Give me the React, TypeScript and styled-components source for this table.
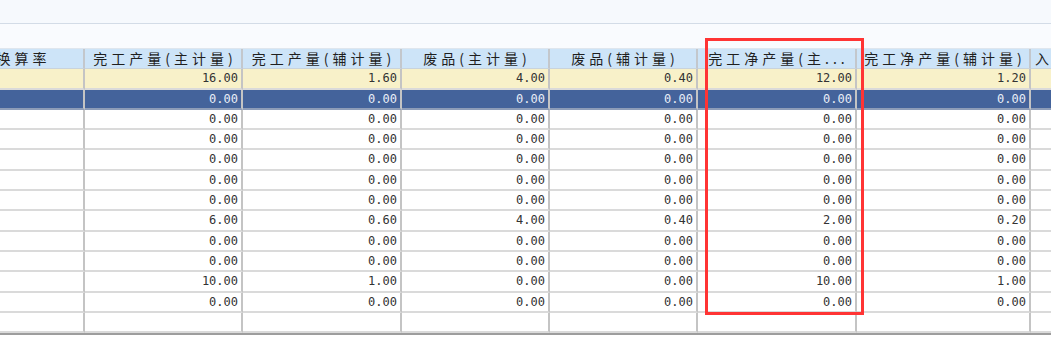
import styled, { createGlobalStyle } from 'styled-components';

const GlobalStyle = createGlobalStyle`
  html, body {
    margin: 0;
    padding: 0;
    background: #ffffff;
  }
  body {
    width: 1051px;
    height: 340px;
    overflow: hidden;
    font-family: 'Noto Sans CJK SC', 'Noto Sans', sans-serif;
  }
`;

const Page = styled.div`
  position: relative;
  width: 1051px;
  height: 340px;
  overflow: hidden;
  display: flex;
  flex-direction: column;
`;

const TopBar = styled.div`
  height: 24px;
  box-sizing: border-box;
  background: #f6f9fd;
  border-bottom: 1px solid #d3dce7;
`;

const ToolBand = styled.div`
  height: 25px;
  box-sizing: border-box;
  background: #f9fbfe;
  border-bottom: 1px solid #dfe6ee;
`;

const Grid = styled.div`
  margin-left: -40px;
  display: grid;
  grid-template-columns: 125px 158px 159px 148px 148px 159px 174px 150px;
  grid-auto-rows: 20.3px;
  border-bottom: 2px solid #9d9d9d;
  width: max-content;
`;

const HeadCell = styled.div<{ $left?: boolean }>`
  box-sizing: border-box;
  background: #cde4f8;
  border-right: 2px solid #c3c7cc;
  border-bottom: 1px solid #c9d3dc;
  font-size: 14px;
  letter-spacing: 4px;
  line-height: 19px;
  color: #1f1f1f;
  white-space: nowrap;
  overflow: hidden;
  text-align: ${(p) => (p.$left ? 'left' : 'center')};
  padding-left: 4px;
`;

const Cell = styled.div<{ $tone: 'sum' | 'sel' | 'plain' }>`
  box-sizing: border-box;
  background: ${(p) =>
    p.$tone === 'sum' ? '#f8f1c9' : p.$tone === 'sel' ? '#44639b' : '#ffffff'};
  border-right: 2px solid #c4c4c4;
  border-bottom: 2px solid ${(p) => (p.$tone === 'sel' ? '#8e9db8' : '#dadada')};
  font-family: 'DejaVu Sans Mono', 'Liberation Mono', monospace;
  font-size: 12px;
  line-height: 19px;
  color: ${(p) => (p.$tone === 'sel' ? '#e9eef7' : '#333333')};
  text-align: right;
  padding-right: 3px;
  white-space: nowrap;
`;

const Marker = styled.div`
  position: absolute;
  left: 705px;
  top: 38px;
  width: 159px;
  height: 277px;
  box-sizing: border-box;
  border: 3px solid #ff3434;
  pointer-events: none;
`;

const headers = [
  '换算率',
  '完工产量(主计量)',
  '完工产量(辅计量)',
  '废品(主计量)',
  '废品(辅计量)',
  '完工净产量(主...',
  '完工净产量(辅计量)',
  '入库数量(主计量)',
];

// one line per row: 完工主, 完工辅, 废品主, 废品辅, 净产主, 净产辅
const rows: (string[] | null)[] = [
  ['16.00', '1.60', '4.00', '0.40', '12.00', '1.20'],
  ['0.00', '0.00', '0.00', '0.00', '0.00', '0.00'],
  ['0.00', '0.00', '0.00', '0.00', '0.00', '0.00'],
  ['0.00', '0.00', '0.00', '0.00', '0.00', '0.00'],
  ['0.00', '0.00', '0.00', '0.00', '0.00', '0.00'],
  ['0.00', '0.00', '0.00', '0.00', '0.00', '0.00'],
  ['0.00', '0.00', '0.00', '0.00', '0.00', '0.00'],
  ['6.00', '0.60', '4.00', '0.40', '2.00', '0.20'],
  ['0.00', '0.00', '0.00', '0.00', '0.00', '0.00'],
  ['0.00', '0.00', '0.00', '0.00', '0.00', '0.00'],
  ['10.00', '1.00', '0.00', '0.00', '10.00', '1.00'],
  ['0.00', '0.00', '0.00', '0.00', '0.00', '0.00'],
  null,
];

const App = () => {
  return (
    <>
      <GlobalStyle />
      <Page>
        <TopBar />
        <ToolBand />
        <Grid>
          {headers.map((h, i) => (
            <HeadCell key={h} $left={i === headers.length - 1}>
              {h}
            </HeadCell>
          ))}
          {rows.map((row, r) => {
            const tone = r === 0 ? 'sum' : r === 1 ? 'sel' : 'plain';
            const values = ['', ...(row ?? ['', '', '', '', '', '']), ''];
            return values.map((v, c) => (
              <Cell key={`${r}-${c}`} $tone={tone}>
                {v}
              </Cell>
            ));
          })}
        </Grid>
        <Marker />
      </Page>
    </>
  );
};

export default App;
